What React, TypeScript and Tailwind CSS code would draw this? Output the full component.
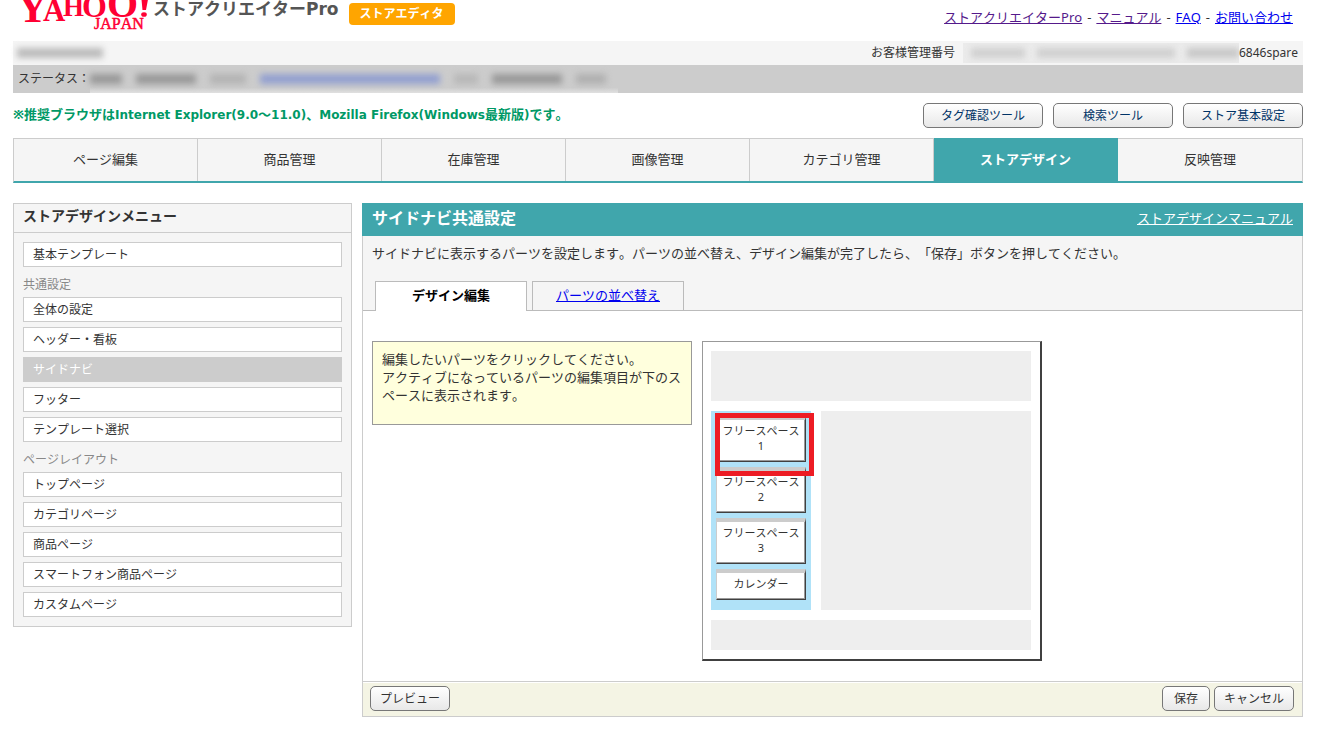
import clsx from 'clsx'

const NAV = ['ページ編集', '商品管理', '在庫管理', '画像管理', 'カテゴリ管理', 'ストアデザイン', '反映管理']

const TOOLS = ['タグ確認ツール', '検索ツール', 'ストア基本設定']

// Sidebar groups, the first one has no heading
const MENU = [
  { heading: '', items: ['基本テンプレート'] },
  { heading: '共通設定', items: ['全体の設定', 'ヘッダー・看板', 'サイドナビ', 'フッター', 'テンプレート選択'] },
  { heading: 'ページレイアウト', items: ['トップページ', 'カテゴリページ', '商品ページ', 'スマートフォン商品ページ', 'カスタムページ'] },
]

const PARTS = [
  { name: 'フリースペース', no: '1' },
  { name: 'フリースペース', no: '2' },
  { name: 'フリースペース', no: '3' },
  { name: 'カレンダー', no: '' },
]

const BUTTON = 'h-[25px] rounded-[5px] border border-[#777] bg-linear-to-b from-white to-[#e8e8e8] text-xs leading-none'

function Logo() {
  return (
    <svg width="132" height="34" viewBox="0 0 132 34" role="img" aria-label="Yahoo! JAPAN" className="shrink-0">
      <g fill="#ff0033" fontFamily="'Liberation Serif', serif" fontWeight="700">
        <text x="0" y="22" fontSize="43">Y</text>
        <text x="26" y="21" fontSize="31">A</text>
        <text x="46" y="16" fontSize="27">H</text>
        <text x="65" y="17" fontSize="32">O</text>
        <text x="90" y="17" fontSize="40">O</text>
        <text x="77" y="29" fontSize="16" fontWeight="400" stroke="#ff0033" strokeWidth="0.5">JAPAN</text>
      </g>
      <path d="M124 -6 L132 -6 L129 10 L125.5 10 Z" fill="#ff0033" />
      <ellipse cx="127" cy="14.5" rx="2.8" ry="2.3" fill="#ff0033" />
    </svg>
  )
}

// Masked account data
function Mask({ className }: { className: string }) {
  return <span className={clsx('block h-2.5 shrink-0 blur-[3px]', className)} />
}

function Header() {
  return (
    <header className="flex h-[41px] items-start justify-between overflow-hidden">
      <div className="flex items-start pl-1">
        <Logo />
        <span className="pl-1 font-['DejaVu_Sans','Noto_Sans_CJK_JP',sans-serif] text-[17px] leading-[18px] font-bold whitespace-nowrap text-[#555]">
          ストアクリエイターPro
        </span>
        <span className="mt-[3px] ml-2.5 w-[106px] rounded-sm bg-[#ffa500] text-center text-xs leading-[22px] font-bold text-white">
          ストアエディタ
        </span>
      </div>
      <nav className="flex gap-[5px] pt-[7px] pr-2.5 text-[13px] leading-5 whitespace-nowrap">
        <a href="#pro" className="text-[#551a8b] underline">ストアクリエイターPro</a>-
        <a href="#manual" className="text-[#551a8b] underline">マニュアル</a>-
        <a href="#faq" className="text-[#0000ee] underline">FAQ</a>-
        <a href="#contact" className="text-[#0000ee] underline">お問い合わせ</a>
      </nav>
    </header>
  )
}

function AccountBars() {
  return (
    <div className="text-xs">
      <div className="flex h-6 items-center justify-between bg-[#f5f5f5] pr-[5px] pl-1">
        <Mask className="w-[86px] bg-[#bbb]" />
        <div className="flex h-full items-center">
          お客様管理番号
          <div className="ml-2 flex h-5 w-[276px] items-center gap-3 overflow-hidden bg-[#ebebeb] pl-2">
            <Mask className="w-[54px] bg-[#d0d0d0]" />
            <Mask className="w-[138px] bg-[#d0d0d0]" />
            <Mask className="w-[52px] bg-[#c8c8c8]" />
          </div>
          6846spare
        </div>
      </div>
      <div className="flex h-7 items-center bg-[#ccc] pl-[5px]">
        ステータス：
        <div className="flex h-full items-center gap-3.5 bg-linear-to-b from-[#ccc] from-80% to-[#e0e0e0] pr-3">
          <Mask className="w-8 bg-[#999]" />
          <Mask className="w-[60px] bg-[#999]" />
          <Mask className="w-9 bg-[#b4b4b4]" />
          <Mask className="w-[180px] bg-[#93a0d0]" />
          <Mask className="w-6 bg-[#b8b8b8]" />
          <Mask className="w-[70px] bg-[#999]" />
          <Mask className="w-[30px] bg-[#b0b0b0]" />
        </div>
      </div>
    </div>
  )
}

// Latin run inside the bold browser notice
function Latin({ children }: { children: string }) {
  return <span className="font-['DejaVu_Sans',sans-serif] text-xs">{children}</span>
}

function SideMenu() {
  return (
    <aside className="w-[339px] shrink-0 border border-[#ccc] bg-[#f5f5f5]">
      <h2 className="border-b border-[#ccc] px-[9px] pb-1 text-sm leading-6 font-bold">ストアデザインメニュー</h2>
      <div className="p-[9px]">
        {MENU.map(({ heading, items }) => (
          <section key={heading}>
            {heading && <h3 className="h-[30px] pt-2 text-xs leading-5 text-[#888]">{heading}</h3>}
            <ul className="flex flex-col gap-[5px]">
              {items.map((item) => (
                <li key={item}>
                  <a
                    href="#menu"
                    className={clsx(
                      'block h-[25px] border border-[#ccc] px-[9px] text-xs leading-6',
                      item === 'サイドナビ' ? 'bg-[#ccc] text-white' : 'bg-white'
                    )}
                  >
                    {item}
                  </a>
                </li>
              ))}
            </ul>
          </section>
        ))}
      </div>
    </aside>
  )
}

function LayoutPreview() {
  return (
    <div className="flex w-[340px] flex-col gap-2.5 border border-r-2 border-b-2 border-t-[#999] border-r-[#404040] border-b-[#404040] border-l-[#999] px-2 py-[9px]">
      <div className="h-[50px] w-80 bg-[#eee]" />
      <div className="flex w-80 gap-2.5">
        <div className="relative flex w-[100px] flex-col gap-[5px] bg-[#b0e2f8] px-[5px] pt-[5px] pb-2.5">
          {PARTS.map(({ name, no }) => (
            <button
              key={name + no}
              type="button"
              className={clsx(
                'flex flex-col items-center border border-t-4 border-t-[#ccc] border-r-[#404040] border-b-[#404040] border-l-[#ccc] bg-white pt-[3px] text-[11px] leading-[15px] shadow-[inset_-1px_-1px_0_#999]',
                no ? 'h-[46px]' : 'h-[31px]'
              )}
            >
              <span>{name}</span>
              {no && <span>{no}</span>}
            </button>
          ))}
          <div className="pointer-events-none absolute top-0.5 left-1 h-[63px] w-[99px] border-5 border-[#ed1c24]" />
        </div>
        <div className="flex-1 bg-[#eee]" />
      </div>
      <div className="h-[30px] w-80 bg-[#eee]" />
    </div>
  )
}

function SettingsPanel() {
  return (
    <main className="min-w-0 flex-1">
      <div className="flex h-[33px] items-center justify-between bg-[#40a6ac] px-2.5 pb-1 text-white">
        <h1 className="text-base leading-5 font-bold">サイドナビ共通設定</h1>
        <a href="#design-manual" className="text-[13px] leading-5 underline">ストアデザインマニュアル</a>
      </div>
      <div className="border border-t-0 border-[#ccc]">
        <div className="border-b border-[#bbb] bg-[#f5f5f5] px-[9px] pt-[7px]">
          <p className="text-[13px] leading-5">
            サイドナビに表示するパーツを設定します。パーツの並べ替え、デザイン編集が完了したら、「保存」ボタンを押してください。
          </p>
          <div className="-mb-px flex gap-[5px] px-[3px] pt-[18px] text-center text-[13px] leading-[26px]">
            <a href="#edit" className="h-[30px] w-[152px] border border-b-0 border-[#bbb] bg-white font-bold text-black">デザイン編集</a>
            <a href="#sort" className="h-[30px] w-[152px] border border-[#bbb] text-[#0000ee] underline">パーツの並べ替え</a>
          </div>
        </div>
        <div className="flex items-start gap-2.5 px-[9px] pt-[30px] pb-5">
          <p className="min-h-[84px] w-80 border border-[#999] bg-[#ffffdd] p-[9px] pt-2 pr-2 text-[13px] leading-[18px]">
            編集したいパーツをクリックしてください。
            <br />
            アクティブになっているパーツの編集項目が下のスペースに表示されます。
          </p>
          <LayoutPreview />
        </div>
        <div className="flex items-center gap-1 border-t border-[#ccc] bg-[#f4f4e4] pt-1 pr-2 pb-[5px] pl-[7px] shadow-[inset_0_1px_0_#fff]">
          <button type="button" className={clsx(BUTTON, 'mr-auto w-20')}>プレビュー</button>
          <button type="button" className={clsx(BUTTON, 'w-12')}>保存</button>
          <button type="button" className={clsx(BUTTON, 'w-20')}>キャンセル</button>
        </div>
      </div>
    </main>
  )
}

export default function App() {
  return (
    <div className="min-h-screen bg-white pr-[26px] pl-[13px] font-['Noto_Sans','Noto_Sans_CJK_JP',sans-serif] text-[#333] [font-kerning:none] [text-spacing-trim:space-all]">
      <Header />
      <AccountBars />
      <div className="flex items-center justify-between py-2.5">
        <p className="pb-1 text-[13px] leading-5 font-bold text-[#009966]">
          ※推奨ブラウザは<Latin>Internet Explorer(9.0</Latin>〜<Latin>11.0)</Latin>、<Latin>Mozilla Firefox(Windows</Latin>最新版<Latin>)</Latin>です。
        </p>
        <div className="flex gap-2.5">
          {TOOLS.map((tool) => (
            <button key={tool} type="button" className={clsx(BUTTON, 'w-[120px] text-[#003366]')}>{tool}</button>
          ))}
        </div>
      </div>
      <nav className="grid grid-cols-7 border border-b-2 border-[#ccc] border-b-[#40a6ac] bg-[#f5f5f5] text-center text-[13px] leading-10">
        {NAV.map((label) => (
          <a
            key={label}
            href="#nav"
            className={clsx(
              'border-r pb-0.5 last:border-r-0',
              label === 'ストアデザイン' ? '-mt-px border-[#40a6ac] bg-[#40a6ac] pt-px font-bold text-white' : 'border-[#ccc]'
            )}
          >
            {label}
          </a>
        ))}
      </nav>
      <div className="flex items-start gap-2.5 pt-5">
        <SideMenu />
        <SettingsPanel />
      </div>
    </div>
  )
}
